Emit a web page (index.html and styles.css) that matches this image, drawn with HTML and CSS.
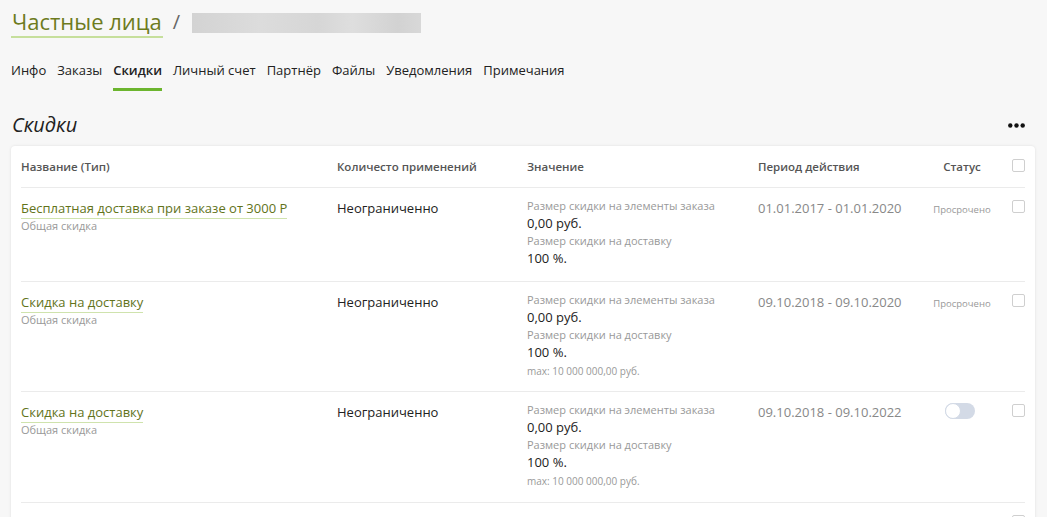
FILE: index.html
```html
<!DOCTYPE html>
<html lang="ru">
<head>
<meta charset="utf-8">
<title>Скидки</title>
<link rel="stylesheet" href="styles.css">
</head>
<body>
<div class="page">
  <div class="crumbs">
    <a class="crumb-link" href="#">Частные лица</a>
    <span class="crumb-sep">/</span>
    <span class="crumb-blur"></span>
  </div>
  <nav class="tabs">
    <a class="tab" href="#">Инфо</a>
    <a class="tab" href="#">Заказы</a>
    <a class="tab tab-active" href="#">Скидки</a>
    <a class="tab" href="#">Личный счет</a>
    <a class="tab" href="#">Партнёр</a>
    <a class="tab" href="#">Файлы</a>
    <a class="tab" href="#">Уведомления</a>
    <a class="tab" href="#">Примечания</a>
  </nav>
  <div class="section-head">
    <h2 class="section-title">Скидки</h2>
    <svg class="more" width="17" height="5" viewBox="0 0 17 5"><circle cx="2.3" cy="2.5" r="2.2"/><circle cx="8.5" cy="2.5" r="2.2"/><circle cx="14.7" cy="2.5" r="2.2"/></svg>
  </div>
  <div class="card">
    <div class="row row-head">
      <div>Название (Тип)</div>
      <div>Количесто применений</div>
      <div>Значение</div>
      <div>Период действия</div>
      <div class="c-status">Статус</div>
      <div class="c-check"><span class="checkbox"></span></div>
    </div>

    <div class="row row-first">
      <div class="c-name"><a class="name-link" href="#">Бесплатная доставка при заказе от 3000 Р</a><div class="sub">Общая скидка</div></div>
      <div class="c-count">Неограниченно</div>
      <div class="c-val">
        <div class="lbl">Размер скидки на элементы заказа</div>
        <div class="val">0,00 руб.</div>
        <div class="lbl">Размер скидки на доставку</div>
        <div class="val">100 %.</div>
      </div>
      <div class="c-period">01.01.2017 - 01.01.2020</div>
      <div class="c-status"><span class="expired">Просрочено</span></div>
      <div class="c-check"><span class="checkbox"></span></div>
    </div>

    <div class="row">
      <div class="c-name"><a class="name-link" href="#">Скидка на доставку</a><div class="sub">Общая скидка</div></div>
      <div class="c-count">Неограниченно</div>
      <div class="c-val">
        <div class="lbl">Размер скидки на элементы заказа</div>
        <div class="val">0,00 руб.</div>
        <div class="lbl">Размер скидки на доставку</div>
        <div class="val">100 %.</div>
        <div class="lbl max">max: 10 000 000,00 руб.</div>
      </div>
      <div class="c-period">09.10.2018 - 09.10.2020</div>
      <div class="c-status"><span class="expired">Просрочено</span></div>
      <div class="c-check"><span class="checkbox"></span></div>
    </div>

    <div class="row row-third">
      <div class="c-name"><a class="name-link" href="#">Скидка на доставку</a><div class="sub">Общая скидка</div></div>
      <div class="c-count">Неограниченно</div>
      <div class="c-val">
        <div class="lbl">Размер скидки на элементы заказа</div>
        <div class="val">0,00 руб.</div>
        <div class="lbl">Размер скидки на доставку</div>
        <div class="val">100 %.</div>
        <div class="lbl max">max: 10 000 000,00 руб.</div>
      </div>
      <div class="c-period">09.10.2018 - 09.10.2022</div>
      <div class="c-status"><span class="toggle"><span class="knob"></span></span></div>
      <div class="c-check"><span class="checkbox"></span></div>
    </div>

    <div class="row">
      <div class="c-name"></div>
      <div class="c-count"></div>
      <div class="c-val"></div>
      <div class="c-period"></div>
      <div class="c-status"></div>
      <div class="c-check"><span class="checkbox"></span></div>
    </div>
  </div>
</div>
</body>
</html>
```

FILE: styles.css
```css
* { box-sizing: border-box; }
html, body { margin: 0; padding: 0; }
body {
  background: #f7f7f7;
  font-family: "Open Sans", "Noto Sans", sans-serif;
  color: #222;
  overflow: hidden;
  height: 517px;
}
a { text-decoration: none; }
.page { padding: 7px 12px 0 11px; }

.crumbs { display: flex; align-items: flex-start; height: 35px; }
.crumb-link {
  font-size: 22px;
  line-height: 29px;
  color: #6d7b1e;
  border-bottom: 2px solid #c6df9c;
  padding: 0 1px;
  height: 31px;
}
.crumb-sep { font-size: 20px; line-height: 29px; color: #666; margin: 0 12px 0 10px; }
.crumb-blur {
  margin-top: 6px;
  width: 229px; height: 20px;
  background: linear-gradient(90deg, #d3d3d3, #dcdcdc 30%, #d6d6d6 55%, #dedede 70%, #d2d2d2 90%, #d8d8d8);
  filter: blur(0.6px);
}

.tabs { display: flex; margin-top: 19px; height: 30px; }
.tab {
  font-size: 13px;
  line-height: 18px;
  color: #222;
  padding: 0 0 9px;
  margin-right: 11px;
  height: 30px;
  border-bottom: 3px solid transparent;
}
.tab-active { font-weight: 600; border-bottom-color: #6cb52e; }

.section-head { display: flex; justify-content: space-between; align-items: center; margin-top: 21px; height: 26px; }
.section-title { margin: 0; font-size: 20px; font-weight: 400; font-style: italic; color: #222; line-height: 26px; padding-left: 1px; }
.more { fill: #111; margin-right: 10px; display: block; }

.card {
  margin-top: 8px;
  background: #fff;
  border-radius: 4px;
  box-shadow: 0 0 3px rgba(0,0,0,0.10);
  padding: 0 10px;
}
.row {
  display: grid;
  grid-template-columns: 316px 190px 231px 160px 88px 1fr;
  border-bottom: 1px solid #ebebeb;
  padding: 11px 0 11px;
  font-size: 13px;
  line-height: 18px;
}
.row-first { padding-bottom: 13px; }
.row-third { padding-bottom: 12px; }
.row-head {
  font-size: 11.5px;
  font-weight: 600;
  color: #555;
  padding: 12px 0 12px;
  line-height: 17px;
}
.c-status { text-align: center; }
.c-check { display: flex; justify-content: flex-end; padding-top: 1px; }
.checkbox {
  width: 13px; height: 13px;
  border: 1px solid #cfcfcf;
  border-radius: 2px;
  background: #fff;
  display: block;
}
.name-link {
  color: #62731a;
  border-bottom: 1px solid #cfe3ad;
  padding-bottom: 1px;
}
.sub { font-size: 11px; color: #999; line-height: 18px; }
.c-count { color: #222; }
.lbl { font-size: 11px; color: #999; line-height: 16px; }
.val { font-size: 13px; line-height: 19px; color: #222; }
.c-val .lbl:first-child { margin-top: -1px; }
.max { font-size: 10px; line-height: 18px; }
.c-period { color: #888; font-size: 13px; }
.expired { font-size: 9.5px; color: #999; line-height: 14px; display: inline-block; margin-top: -2px; }
.toggle {
  display: inline-block;
  width: 30px; height: 16px;
  border-radius: 8px;
  background: #d3dae6;
  position: relative;
  margin-top: 0;
  margin-right: 4px;
}
.knob {
  position: absolute;
  left: 0; top: 0;
  width: 16px; height: 16px;
  border-radius: 50%;
  background: #fff;
  border: 1px solid #d3dae6;
}
```
